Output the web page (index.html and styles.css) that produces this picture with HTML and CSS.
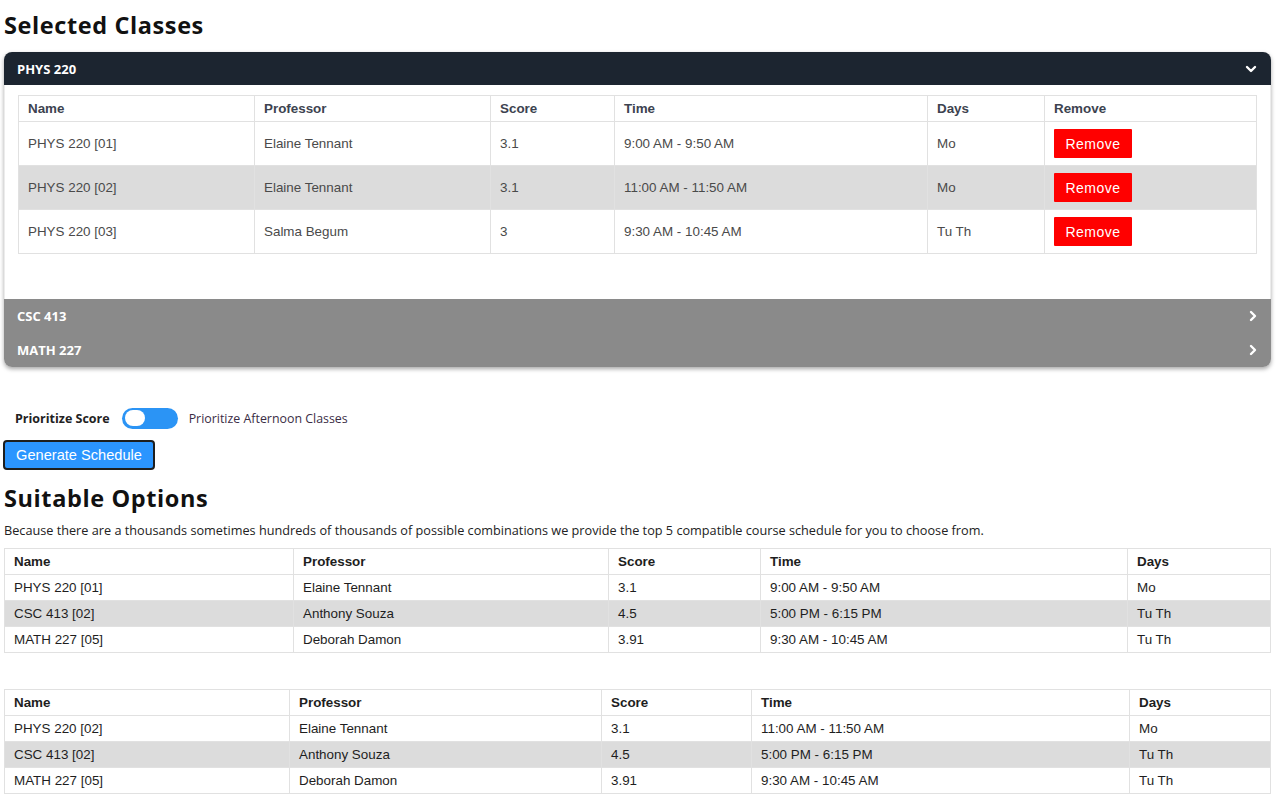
FILE: index.html
```html
<!DOCTYPE html>
<html>
<head>
<meta charset="utf-8">
<title>Schedule Builder</title>
<link rel="stylesheet" href="styles.css">
</head>
<body>
<div class="page">
  <h2 class="title">Selected Classes</h2>

  <div class="accordion">
    <div class="acc-item open">
      <div class="acc-head dark">
        <span>PHYS 220</span>
        <svg class="chev" width="12" height="8" viewBox="0 0 12 8"><polyline points="2,2 6,6 10,2" fill="none" stroke="#fff" stroke-width="2.4" stroke-linecap="round" stroke-linejoin="round"/></svg>
      </div>
      <div class="acc-body">
        <table class="sel-table">
          <thead>
            <tr><th>Name</th><th>Professor</th><th>Score</th><th>Time</th><th>Days</th><th>Remove</th></tr>
          </thead>
          <tbody>
            <tr><td>PHYS 220 [01]</td><td>Elaine Tennant</td><td>3.1</td><td>9:00 AM - 9:50 AM</td><td>Mo</td><td><button class="remove">Remove</button></td></tr>
            <tr class="alt"><td>PHYS 220 [02]</td><td>Elaine Tennant</td><td>3.1</td><td>11:00 AM - 11:50 AM</td><td>Mo</td><td><button class="remove">Remove</button></td></tr>
            <tr><td>PHYS 220 [03]</td><td>Salma Begum</td><td>3</td><td>9:30 AM - 10:45 AM</td><td>Tu Th</td><td><button class="remove">Remove</button></td></tr>
          </tbody>
        </table>
      </div>
    </div>
    <div class="acc-item closed">
      <div class="acc-head gray">
        <span>CSC 413</span>
        <svg class="chev" width="8" height="12" viewBox="0 0 8 12"><polyline points="2,2 6,6 2,10" fill="none" stroke="#fff" stroke-width="2.4" stroke-linecap="round" stroke-linejoin="round"/></svg>
      </div>
    </div>
    <div class="acc-item closed last">
      <div class="acc-head gray">
        <span>MATH 227</span>
        <svg class="chev" width="8" height="12" viewBox="0 0 8 12"><polyline points="2,2 6,6 2,10" fill="none" stroke="#fff" stroke-width="2.4" stroke-linecap="round" stroke-linejoin="round"/></svg>
      </div>
    </div>
  </div>

  <div class="toggle-row">
    <span class="tlabel-bold">Prioritize Score</span>
    <span class="switch"><span class="knob"></span></span>
    <span class="tlabel">Prioritize Afternoon Classes</span>
  </div>

  <button class="generate">Generate Schedule</button>

  <h2 class="title sub">Suitable Options</h2>
  <p class="intro">Because there are a thousands sometimes hundreds of thousands of possible combinations we provide the top 5 compatible course schedule for you to choose from.</p>

  <table class="opt-table t1">
    <thead><tr><th>Name</th><th>Professor</th><th>Score</th><th>Time</th><th>Days</th></tr></thead>
    <tbody>
      <tr><td>PHYS 220 [01]</td><td>Elaine Tennant</td><td>3.1</td><td>9:00 AM - 9:50 AM</td><td>Mo</td></tr>
      <tr class="alt"><td>CSC 413 [02]</td><td>Anthony Souza</td><td>4.5</td><td>5:00 PM - 6:15 PM</td><td>Tu Th</td></tr>
      <tr><td>MATH 227 [05]</td><td>Deborah Damon</td><td>3.91</td><td>9:30 AM - 10:45 AM</td><td>Tu Th</td></tr>
    </tbody>
  </table>

  <table class="opt-table t2">
    <thead><tr><th>Name</th><th>Professor</th><th>Score</th><th>Time</th><th>Days</th></tr></thead>
    <tbody>
      <tr><td>PHYS 220 [02]</td><td>Elaine Tennant</td><td>3.1</td><td>11:00 AM - 11:50 AM</td><td>Mo</td></tr>
      <tr class="alt"><td>CSC 413 [02]</td><td>Anthony Souza</td><td>4.5</td><td>5:00 PM - 6:15 PM</td><td>Tu Th</td></tr>
      <tr><td>MATH 227 [05]</td><td>Deborah Damon</td><td>3.91</td><td>9:30 AM - 10:45 AM</td><td>Tu Th</td></tr>
    </tbody>
  </table>
</div>
</body>
</html>
```

FILE: styles.css
```css
* { box-sizing: border-box; }
html, body { margin: 0; padding: 0; background: #fff; }
body { font-family: "Open Sans", "Noto Sans", sans-serif; color: #111; }

.page {
  width: 1271px;
  padding: 0 0 0 4px;
}

.title {
  font-family: "Open Sans", sans-serif;
  font-weight: 700;
  font-size: 23.5px;
  letter-spacing: 0.6px;
  line-height: 30px;
  margin: 10px 0 12px;
  color: #111;
}
.title.sub { margin: 13px 0 8px; }

/* Accordion */
.accordion {
  border-radius: 8px;
  box-shadow: 0 2px 4px rgba(0,0,0,0.35);
  overflow: hidden;
  background: #fff;
}
.acc-head {
  height: 34px;
  display: flex;
  align-items: center;
  justify-content: space-between;
  padding: 0 14px 0 13px;
  background: #1c2530;
  color: #fff;
  font-family: "Open Sans", sans-serif;
  font-weight: 700;
  font-size: 13px;
}
.acc-head.dark { height: 33px; }
.acc-head.gray { background: #8a8a8a; }
.acc-head .chev { display: block; }

.acc-body {
  padding: 10px 13px 45px 13px;
  border-left: 1px solid #ececec;
  border-right: 1px solid #ececec;
}

/* Tables */
table { border-collapse: collapse; font-family: "Liberation Sans", Arial, sans-serif; }

.sel-table { width: 100%; table-layout: fixed; }
.sel-table th, .sel-table td {
  border: 1px solid #e1e1e1;
  text-align: left;
  font-size: 13.4px;
  line-height: 15px;
  padding: 5px 9px;
  vertical-align: middle;
}
.sel-table th { font-weight: 700; color: #3d4350; }
.sel-table td { color: #4a4a4a; height: 44px; padding: 0 9px; }
.sel-table tr.alt td { background: #dcdcdc; }
.sel-table th:nth-child(1) { width: 236px; }
.sel-table th:nth-child(2) { width: 236px; }
.sel-table th:nth-child(3) { width: 124px; }
.sel-table th:nth-child(4) { width: 313px; }
.sel-table th:nth-child(5) { width: 117px; }

.remove {
  background: #ff0000;
  color: #fff;
  border: none;
  border-radius: 1px;
  font-family: "Liberation Sans", Arial, sans-serif;
  font-size: 14px;
  letter-spacing: 0.5px;
  width: 78px;
  height: 29px;
  padding: 0;
  cursor: pointer;
}

/* Toggle */
.toggle-row {
  display: flex;
  align-items: center;
  gap: 11px;
  padding-left: 11px;
  margin-top: 41px;
  height: 20px;
}
.tlabel-bold { font-weight: 700; font-size: 12.5px; color: #222; margin-right: 1px; }
.tlabel { font-size: 12.4px; color: #3a2d45; }
.switch {
  width: 56px;
  height: 21px;
  border-radius: 11px;
  background: #2b94f5;
  position: relative;
  display: inline-block;
}
.knob {
  position: absolute;
  left: 3px;
  top: 2.5px;
  width: 20px;
  height: 16px;
  border-radius: 8px;
  background: #fff;
}

.generate {
  display: block;
  margin: 12px 0 0 -1px;
  width: 152px;
  height: 30px;
  background: #2b95ff;
  color: #fff;
  border: 2px solid #1e1e1e;
  border-radius: 4px;
  font-family: "Liberation Sans", Arial, sans-serif;
  font-size: 14.6px;
  padding: 0;
}

.intro {
  font-size: 12.7px;
  line-height: 18px;
  margin: 0 0 9px;
  color: #222;
}

.opt-table { width: 100%; table-layout: fixed; margin-bottom: 36px; }
.opt-table th, .opt-table td {
  border: 1px solid #e1e1e1;
  text-align: left;
  font-size: 13.4px;
  line-height: 15px;
  padding: 5px 9px;
  color: #1e1e1e;
}
.opt-table th { font-weight: 700; }
.opt-table tr.alt td { background: #dcdcdc; }
.t1 th:nth-child(1) { width: 289px; }
.t1 th:nth-child(2) { width: 315px; }
.t1 th:nth-child(3) { width: 152px; }
.t1 th:nth-child(4) { width: 367px; }
.t2 th:nth-child(1) { width: 285px; }
.t2 th:nth-child(2) { width: 312px; }
.t2 th:nth-child(3) { width: 150px; }
.t2 th:nth-child(4) { width: 378px; }
```
